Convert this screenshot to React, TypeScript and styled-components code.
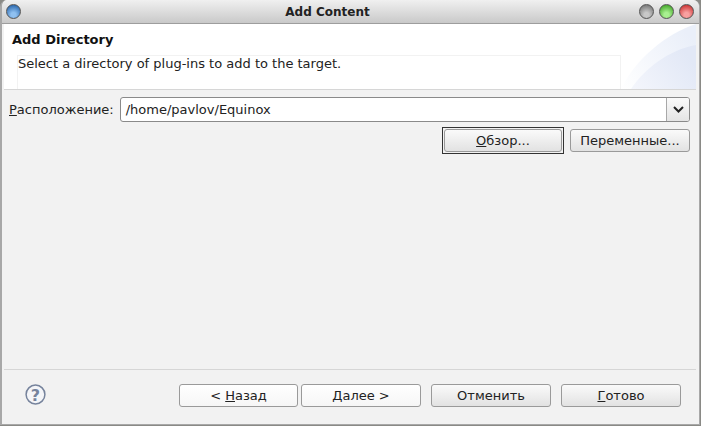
import React from 'react';
import styled, { createGlobalStyle } from 'styled-components';

const GlobalStyle = createGlobalStyle`
  html, body {
    margin: 0;
    padding: 0;
    background: #8a8a86;
  }
  body {
    width: 701px;
    height: 426px;
    overflow: hidden;
    font-family: "DejaVu Sans", sans-serif;
    font-size: 13px;
    color: #111;
  }
`;

const Frame = styled.div`
  box-sizing: border-box;
  width: 700px;
  height: 425px;
  display: flex;
  flex-direction: column;
  background: #f2f2f2;
  border: 1px solid #a8a8a8;
  border-top: 0;
  border-left-width: 2px;
  border-radius: 7px 7px 0 0;
  overflow: hidden;
`;

const TitleBar = styled.div`
  flex: none;
  height: 24px;
  box-sizing: border-box;
  display: flex;
  align-items: center;
  justify-content: space-between;
  padding: 0 5px 0 4px;
  background: linear-gradient(#f0f0f0, #c9c9c9);
  border-bottom: 1px solid #9d9d9d;
`;

const Title = styled.div`
  flex: 1;
  text-align: center;
  font-weight: bold;
  font-size: 12px;
  color: #222;
  padding-right: 5px;
`;

const WindowDot = styled.span<{ $c: string; $d: string }>`
  display: block;
  box-sizing: border-box;
  width: 15px;
  height: 15px;
  border-radius: 50%;
  border: 1px solid #555;
  background: radial-gradient(circle at 50% 75%, ${p => p.$c} 20%, ${p => p.$d} 90%);
`;

const Controls = styled.div`
  display: flex;
  gap: 5px;
`;

const Banner = styled.div`
  flex: none;
  height: 66px;
  box-sizing: border-box;
  position: relative;
  margin: 0 3px 0 2px;
  background: #fff;
  border-bottom: 1px solid #d6d6d6;
  padding: 0 0 0 8px;
  overflow: hidden;
`;

const BannerTitle = styled.div`
  font-weight: bold;
  font-size: 13px;
  line-height: 16px;
  padding-top: 8px;
  height: 31px;
  box-sizing: border-box;
`;

const Message = styled.div`
  box-sizing: border-box;
  margin-left: 5px;
  width: 604px;
  height: 35px;
  line-height: 16px;
  border: 1px solid #f2f2f2;
  border-bottom: 0;
  color: #222;
`;

const Swoosh = styled.svg`
  position: absolute;
  right: 0;
  top: 0;
`;

const Content = styled.div`
  flex: 1;
  display: flex;
  flex-direction: column;
  padding: 7px 9px 0 7px;
`;

const FieldRow = styled.div`
  display: flex;
  align-items: center;
  gap: 6px;
`;

const FieldLabel = styled.label`
  color: #222;
  white-space: nowrap;
`;

const Combo = styled.div`
  flex: 1;
  height: 25px;
  box-sizing: border-box;
  display: flex;
  border: 1px solid #8a8a8a;
  border-radius: 3px;
  background: #fff;
  overflow: hidden;
`;

const ComboText = styled.div`
  flex: 1;
  line-height: 23px;
  padding-left: 5px;
  color: #222;
`;

const ComboArrow = styled.div`
  width: 22px;
  display: flex;
  align-items: center;
  justify-content: center;
  border-left: 1px solid #a8a8a8;
  background: linear-gradient(#fafafa, #e4e4e4);
`;

const BrowseRow = styled.div`
  display: flex;
  justify-content: flex-end;
  align-items: center;
  gap: 6px;
  margin-top: 5px;
`;

const Focus = styled.div`
  border: 1px solid #333;
  padding: 1px;
  display: flex;
`;

const Button = styled.button<{ $w: number; $light?: boolean }>`
  width: ${p => p.$w}px;
  height: 23px;
  box-sizing: border-box;
  border: 1px solid #9a9a9a;
  border-radius: 3px;
  padding: 0;
  font: inherit;
  color: #222;
  background: ${p => (p.$light ? 'linear-gradient(#ffffff, #f6f6f6)' : 'linear-gradient(#fafafa, #e2e2e2)')};
`;

const Spacer = styled.div`
  flex: 1;
`;

const Footer = styled.div`
  flex: none;
  height: 55px;
  box-sizing: border-box;
  margin: 0 3px 0 2px;
  border-top: 1px solid #d6d6d6;
  display: flex;
  align-items: flex-start;
  padding: 14px 15px 0 21px;
`;

const FooterButtons = styled.div`
  display: flex;
  margin-left: auto;
`;

const NavGap = styled.div<{ $w: number }>`
  width: ${p => p.$w}px;
`;

const Help = styled.svg`
  display: block;
`;

export default function App() {
  return (
    <>
      <GlobalStyle />
      <Frame>
        <TitleBar>
          <WindowDot $c="#8fc0f0" $d="#1f5fa8" />
          <Title>Add Content</Title>
          <Controls>
            <WindowDot $c="#c8c8c8" $d="#707070" />
            <WindowDot $c="#a8f090" $d="#3aa020" />
            <WindowDot $c="#f8a0a0" $d="#c82a2a" />
          </Controls>
        </TitleBar>
        <Banner>
          <BannerTitle>Add Directory</BannerTitle>
          <Message>Select a directory of plug-ins to add to the target.</Message>
          <Swoosh width="75" height="65" viewBox="0 0 75 65">
            <defs>
              <linearGradient id="swooshFade" x1="0" y1="1" x2="1" y2="0.3">
                <stop offset="0" stopColor="#ffffff" />
                <stop offset="1" stopColor="#eaeff9" />
              </linearGradient>
              <linearGradient id="swooshFadeInner" x1="0" y1="1" x2="1" y2="0.5">
                <stop offset="0" stopColor="#f4f6fc" />
                <stop offset="1" stopColor="#e2e8f6" />
              </linearGradient>
            </defs>
            <path d="M0 65 C14 36 44 10 75 0 V65 Z" fill="url(#swooshFade)" />
            <path d="M10 65 C24 44 48 26 75 21 V65 Z" fill="url(#swooshFadeInner)" />
          </Swoosh>
        </Banner>
        <Content>
          <FieldRow>
            <FieldLabel><u>Р</u>асположение:</FieldLabel>
            <Combo>
              <ComboText>/home/pavlov/Equinox</ComboText>
              <ComboArrow>
                <svg width="11" height="7" viewBox="0 0 11 7">
                  <path d="M1 1 L5.5 5.5 L10 1" fill="none" stroke="#222" strokeWidth="2" />
                </svg>
              </ComboArrow>
            </Combo>
          </FieldRow>
          <BrowseRow>
            <Focus>
              <Button $w={118}><u>О</u>бзор...</Button>
            </Focus>
            <Button $w={120}>Переменные...</Button>
          </BrowseRow>
          <Spacer />
        </Content>
        <Footer>
          <Help width="21" height="21" viewBox="0 0 21 21">
            <circle cx="10.5" cy="10.5" r="9.4" fill="#f4f5f8" stroke="#76839c" strokeWidth="1.5" />
            <text x="10.5" y="16.5" textAnchor="middle" fontSize="16" fontWeight="bold" fontFamily="DejaVu Sans" fill="#76839c">?</text>
          </Help>
          <FooterButtons>
            <Button $w={119} $light>&lt; <u>Н</u>азад</Button>
            <NavGap $w={3} />
            <Button $w={120} $light>Далее &gt;</Button>
            <NavGap $w={10} />
            <Button $w={120}>Отменить</Button>
            <NavGap $w={10} />
            <Button $w={120}><u>Г</u>отово</Button>
          </FooterButtons>
        </Footer>
      </Frame>
    </>
  );
}
